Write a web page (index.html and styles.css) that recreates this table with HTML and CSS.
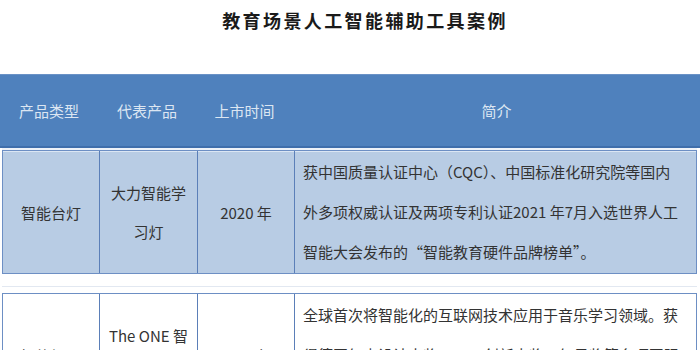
FILE: index.html
```html
<!DOCTYPE html>
<html lang="zh-CN">
<head>
<meta charset="utf-8">
<title>教育场景人工智能辅助工具案例</title>
<link rel="stylesheet" href="styles.css">
</head>
<body>
<div class="page">
  <h1 class="title">教育场景人工智能辅助工具案例</h1>
  <div class="head">
    <div class="hcell">产品类型</div>
    <div class="hcell">代表产品</div>
    <div class="hcell">上市时间</div>
    <div class="hcell">简介</div>
  </div>
  <div class="sep-top"></div>
  <div class="row row-blue">
    <div class="cell c1">智能台灯</div>
    <div class="cell c2">大力智能学习灯</div>
    <div class="cell c3">2020 年</div>
    <div class="cell desc">获中国质量认证中心（CQC）、中国标准化研究院等国内外多项权威认证及两项专利认证2021 年7月入选世界人工智能大会发布的“智能教育硬件品牌榜单”。</div>
  </div>
  <div class="gap"><div class="gap-line"></div></div>
  <div class="row row-white">
    <div class="cell c1">智能钢琴</div>
    <div class="cell c2">The ONE 智能钢琴</div>
    <div class="cell c3">2015 年</div>
    <div class="cell desc">全球首次将智能化的互联网技术应用于音乐学习领域。获得德国红点设计大奖、CES 创新大奖、红星奖等多项国际国内设计大奖。</div>
  </div>
</div>
</body>
</html>
```
FILE: styles.css
```css
html, body {
  margin: 0;
  padding: 0;
  background: #ffffff;
}
.page {
  width: 700px;
  font-family: "Noto Sans CJK SC", "Liberation Sans", sans-serif;
  color: #333333;
}
.title {
  margin: 0;
  height: 74px;
  box-sizing: border-box;
  padding: 0 0 0 30px;
  line-height: 40px;
  font-size: 18px;
  font-weight: bold;
  letter-spacing: 2.4px;
  text-align: center;
  color: #1a1a1a;
}
.head {
  display: grid;
  grid-template-columns: 98px 98px 97px 1fr;
  height: 74px;
  background: #4f81bd;
  border-top: 1px solid #6a92c6;
  border-bottom: 2px solid #3f6eab;
  box-sizing: border-box;
}
.hcell {
  display: flex;
  align-items: center;
  justify-content: center;
  font-size: 15px;
  color: #dce6f2;
}
.sep-top {
  height: 2px;
  margin: 0 3px 0 2px;
  background: #eef2f8;
}
.row {
  display: grid;
  grid-template-columns: 96px 98px 97px 1fr;
  margin: 0 3px 0 2px;
  border: 1px solid #6d8fc4;
}
.row-blue {
  background: #b8cce4;
  box-shadow: inset 0 1px 0 #dbe6f3;
}
.row-white {
  background: #ffffff;
}
.cell {
  display: flex;
  align-items: center;
  justify-content: center;
  text-align: center;
  font-size: 15px;
  line-height: 39px;
  padding: 2px 8px;
  border-left: 1px solid #5b7fb8;
}
.c1 {
  border-left: none;
}
.desc {
  justify-content: flex-start;
  text-align: left;
  line-height: 40px;
  padding: 1px 13px 1px 8px;
}
.gap {
  height: 19px;
  display: flex;
  align-items: center;
  margin: 0 3px 0 2px;
}
.gap-line {
  flex: 1;
  height: 1px;
  margin-top: 6px;
  background: #e2e8f1;
}
```
